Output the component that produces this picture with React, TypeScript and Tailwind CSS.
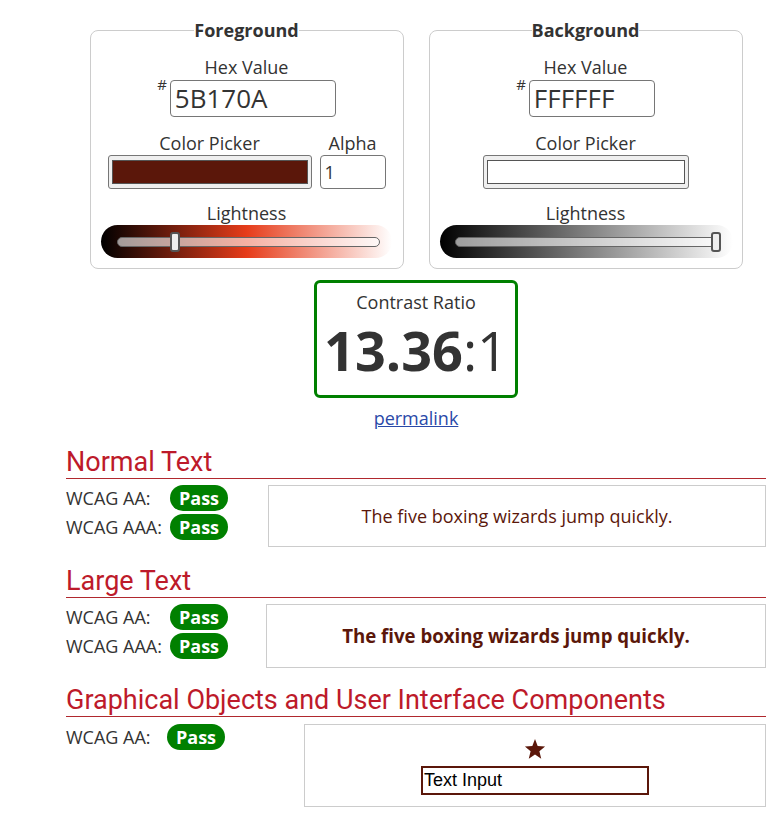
import React from "react";

function Slider({ fg }: { fg?: boolean }) {
  return (
    <div
      className={
        fg
          ? "ml-[10px] w-[291px] h-[33px] rounded-full bg-[linear-gradient(to_right,#000_0%,#e63c1a_50%,#fff_100%)] pt-[12px] pl-[16px] pr-[12px]"
          : "ml-[10px] w-[293px] h-[33px] rounded-full bg-[linear-gradient(to_right,#000_0%,#808080_50%,#fff_100%)] pt-[12px] pl-[15px] pr-[12px]"
      }
    >
      <div className="relative h-[10px] rounded-full border border-[#666] bg-[rgba(255,255,255,0.6)]">
        <div
          className={
            fg
              ? "absolute left-[52px] top-[-6px] w-[10px] h-[20px] rounded-[3px] border-2 border-[#555] bg-[#eee]"
              : "absolute right-[-1px] top-[-6px] w-[10px] h-[20px] rounded-[3px] border-2 border-[#555] bg-[#eee]"
          }
        />
      </div>
    </div>
  );
}

function Fieldset({ fg }: { fg?: boolean }) {
  return (
    <fieldset className="w-[314px] border border-[#ccc] rounded-[8px] m-0 px-0 pt-[13px] pb-[10px]">
      <legend className="mx-auto px-0 text-[18px] font-bold leading-[24px]">
        {fg ? "Foreground" : "Background"}
      </legend>
      <div className="text-center text-[18px] leading-[24px]">Hex Value</div>
      <div className="flex justify-center items-start mt-px">
        <span className="text-[15px] leading-[15px] -mt-[3px] mr-[3px]">#</span>
        <div
          className={
            (fg ? "w-[166px]" : "w-[126px]") +
            " h-[37px] border border-[#767676] rounded-[4px] text-[26px] leading-[35px] pl-[4px]"
          }
        >
          {fg ? "5B170A" : "FFFFFF"}
        </div>
      </div>
      <div className="flex justify-center gap-[8px] mt-[14px]">
        <div className="flex flex-col items-center">
          <div className="text-[18px] leading-[24px]">Color Picker</div>
          <div
            className={
              (fg ? "w-[204px]" : "w-[206px]") +
              " h-[34px] border border-[#767676] rounded-[3px] bg-[#efefef] px-[3px] py-[4px]"
            }
          >
            <div
              className={
                "w-full h-full border border-[#555] " +
                (fg ? "bg-[#5B170A]" : "bg-white")
              }
            />
          </div>
        </div>
        {fg && (
          <div className="flex flex-col items-center">
            <div className="text-[18px] leading-[24px]">Alpha</div>
            <div className="w-[66px] h-[34px] border border-[#767676] rounded-[4px] text-[18px] leading-[32px] pl-[4px]">
              1
            </div>
          </div>
        )}
      </div>
      <div className="text-center text-[18px] leading-[24px] mt-[12px]">Lightness</div>
      <Slider fg={fg} />
    </fieldset>
  );
}

function Pass() {
  return (
    <span className="inline-block w-[58px] h-[26px] rounded-full bg-[#008000] text-white font-bold text-[18px] leading-[26px] text-center">
      Pass
    </span>
  );
}

function Row({ label, w }: { label: string; w: string }) {
  return (
    <div className="flex items-center h-[29px]">
      <div className={w + " text-[18px] leading-[24px]"}>{label}</div>
      <Pass />
    </div>
  );
}

function Heading({ children }: { children: React.ReactNode }) {
  return (
    <h2 className="font-['Roboto',sans-serif] text-[27px] leading-[32px] text-[#bd1a2a] border-b border-[#b0282e]">
      {children}
    </h2>
  );
}

export default function App() {
  return (
    <div className="font-['Open_Sans',sans-serif] text-[#333] bg-white w-[774px] min-h-[814px] overflow-hidden">
      <div className="ml-[66px] w-[700px] pt-[18px]">
        <div className="flex justify-center gap-[25px]">
          <Fieldset fg />
          <Fieldset />
        </div>
        <div className="mx-auto mt-[11px] w-[204px] h-[118px] border-[3px] border-[#008000] rounded-[6px] flex flex-col items-center pt-[7px]">
          <div className="text-[18px] leading-[24px]">Contrast Ratio</div>
          <div className="mt-[9px] text-[54px] leading-[54px] text-[#333]">
            <span className="font-bold">13.36</span>:1
          </div>
        </div>
        <div className="text-center mt-[8px] text-[18px] leading-[24px]">
          <a className="text-[#2a49a8] underline" href="#">permalink</a>
        </div>

        <div className="mt-[16px]">
          <Heading>Normal Text</Heading>
          <div className="flex mt-[6px]">
            <div className="w-[202px] shrink-0 -mt-[2px]">
              <Row label="WCAG AA:" w="w-[104px]" />
              <Row label="WCAG AAA:" w="w-[104px]" />
            </div>
            <div className="flex-1 h-[62px] border border-[#ccc] flex items-center justify-center text-[18px] text-[#5B170A]">
              The five boxing wizards jump quickly.
            </div>
          </div>
        </div>

        <div className="mt-[18px]">
          <Heading>Large Text</Heading>
          <div className="flex mt-[6px]">
            <div className="w-[200px] shrink-0 -mt-[2px]">
              <Row label="WCAG AA:" w="w-[104px]" />
              <Row label="WCAG AAA:" w="w-[104px]" />
            </div>
            <div className="flex-1 h-[64px] border border-[#ccc] flex items-center justify-center text-[18.66px] font-bold text-[#5B170A]">
              The five boxing wizards jump quickly.
            </div>
          </div>
        </div>

        <div className="mt-[16px]">
          <Heading>Graphical Objects and User Interface Components</Heading>
          <div className="flex mt-[7px]">
            <div className="w-[238px] shrink-0 -mt-[2px]">
              <Row label="WCAG AA:" w="w-[101px]" />
            </div>
            <div className="flex-1 h-[83px] border border-[#ccc] flex flex-col items-center pt-[13px]">
              <svg width="22" height="22" viewBox="0 0 24 24" aria-hidden="true">
                <polygon
                  fill="#5B170A"
                  points="12,1 14.9,8.6 23,9.2 16.8,14.4 18.8,22.5 12,18 5.2,22.5 7.2,14.4 1,9.2 9.1,8.6"
                />
              </svg>
              <div className="mt-[6px] w-[228px] h-[29px] border-2 border-[#5B170A] font-['Liberation_Sans',Arial,sans-serif] text-[18px] leading-[25px] text-black pl-[1px]">
                Text Input
              </div>
            </div>
          </div>
        </div>
      </div>
    </div>
  );
}
